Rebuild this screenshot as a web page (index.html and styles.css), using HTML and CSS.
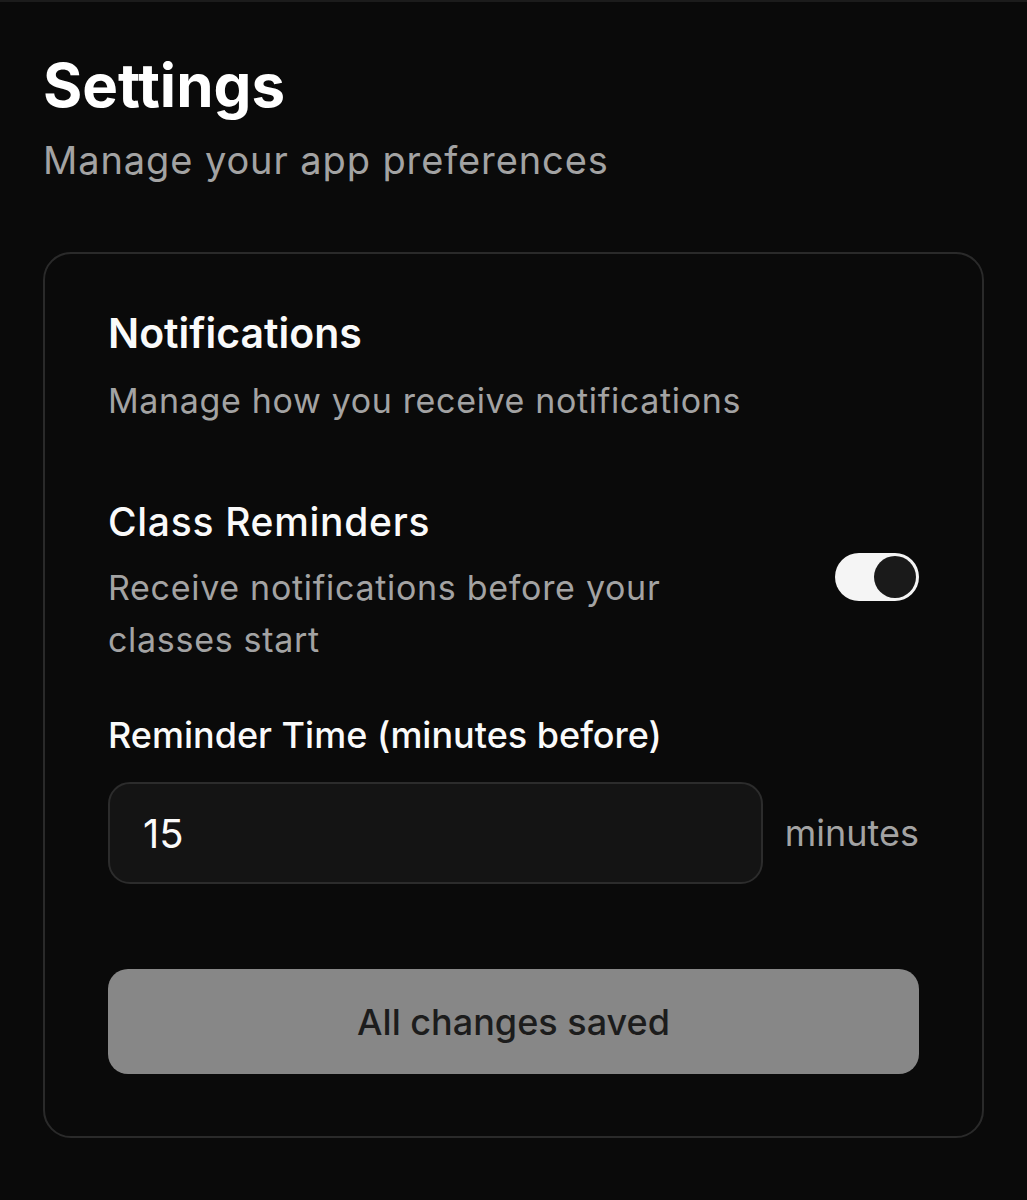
FILE: index.html
```html
<!DOCTYPE html>
<html lang="en">
  <head>
    <meta charset="UTF-8" />
    <meta name="viewport" content="width=device-width, initial-scale=1.0" />
    <title>Settings</title>
    <link rel="stylesheet" href="styles.css">
  </head>
  <body>
    <main class="page">
      <h1>Settings</h1>
      <p class="subtitle">Manage your app preferences</p>

      <section class="card">
        <h2>Notifications</h2>
        <p class="card-desc">Manage how you receive notifications</p>

        <div class="setting-row">
          <div class="setting-text">
            <h3>Class Reminders</h3>
            <p class="setting-desc">Receive notifications before your classes start</p>
          </div>
          <button class="toggle on" aria-label="Class reminders"><span class="knob"></span></button>
        </div>

        <label class="field-label" for="reminder-time">Reminder Time (minutes before)</label>
        <div class="field-row">
          <input id="reminder-time" class="field-input" type="text" value="15" />
          <span class="field-unit">minutes</span>
        </div>

        <button class="save-btn" disabled>All changes saved</button>
      </section>
    </main>
  </body>
</html>
```

FILE: styles.css
```css
body {
  margin: 0;
  background-color: #0a0a0a;
  color: #fafafa;
  font-family: Inter, "Noto Sans", sans-serif;
  border-top: 2px solid #1c1c1c;
}
.page {
  padding: 47px 43px 60px;
}
h1 {
  margin: 0;
  font-size: 60px;
  line-height: 72px;
  font-weight: 700;
  color: #ffffff;
}
.subtitle {
  margin: 15px 0 0;
  font-size: 38px;
  line-height: 48px;
  letter-spacing: 0.9px;
  color: #a3a3a3;
}
.card {
  margin-top: 68px;
  border: 2px solid #2a2a2a;
  border-radius: 28px;
  padding: 54px 63px 62px 63px;
}
h2 {
  margin: 0;
  font-size: 41px;
  line-height: 50px;
  font-weight: 600;
}
.card-desc {
  margin: 21px 0 0;
  font-size: 34px;
  line-height: 44px;
  letter-spacing: 0.65px;
  color: #a3a3a3;
}
.setting-row {
  display: flex;
  align-items: flex-start;
  justify-content: space-between;
  margin-top: 74px;
}
.setting-text {
  max-width: 620px;
}
h3 {
  margin: 0;
  font-size: 39px;
  line-height: 50px;
  font-weight: 500;
  letter-spacing: 0.7px;
}
.setting-desc {
  margin: 15px 0 0;
  font-size: 34px;
  line-height: 52px;
  letter-spacing: 0.7px;
  color: #a3a3a3;
}
.toggle {
  position: relative;
  width: 84px;
  height: 48px;
  margin-top: 56px;
  border: none;
  border-radius: 24px;
  background-color: #f5f5f5;
  padding: 0;
  cursor: pointer;
  flex-shrink: 0;
}
.knob {
  position: absolute;
  top: 3px;
  right: 3px;
  width: 42px;
  height: 42px;
  border-radius: 50%;
  background-color: #1a1a1a;
}
.field-label {
  display: block;
  margin-top: 45px;
  font-size: 36px;
  line-height: 48px;
  font-weight: 500;
}
.field-row {
  display: flex;
  align-items: center;
  gap: 22px;
  margin-top: 23px;
}
.field-input {
  flex: 1;
  box-sizing: border-box;
  height: 102px;
  min-width: 0;
  padding: 0 33px;
  border: 2px solid #2c2c2c;
  border-radius: 22px;
  background-color: #141414;
  color: #fafafa;
  font-family: inherit;
  font-size: 40px;
  outline: none;
}
.field-unit {
  font-size: 36px;
  color: #a3a3a3;
}
.save-btn {
  display: block;
  width: 100%;
  height: 105px;
  margin-top: 85px;
  border: none;
  border-radius: 20px;
  background-color: #878787;
  color: #1c1c1c;
  font-family: inherit;
  font-size: 36px;
  font-weight: 500;
}
```
